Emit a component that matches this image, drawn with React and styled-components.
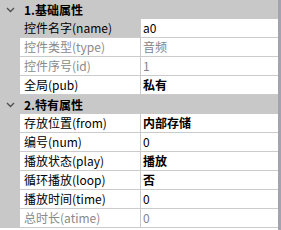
import React from "react";
import styled, { createGlobalStyle } from "styled-components";

const GlobalStyle = createGlobalStyle`
  body {
    margin: 0;
    background: #ffffff;
    font-family: "Noto Sans CJK SC", "Liberation Sans", sans-serif;
  }
`;

const groups = [
  {
    title: "1.基础属性",
    rows: [
      { label: "控件名字(name)", value: "a0", current: true },
      { label: "控件类型(type)", value: "音频", disabled: true },
      { label: "控件序号(id)", value: "1", disabled: true },
      { label: "全局(pub)", value: "私有", bold: true },
    ],
  },
  {
    title: "2.特有属性",
    rows: [
      { label: "存放位置(from)", value: "内部存储", bold: true },
      { label: "编号(num)", value: "0" },
      { label: "播放状态(play)", value: "播放", bold: true },
      { label: "循环播放(loop)", value: "否", bold: true },
      { label: "播放时间(time)", value: "0" },
      { label: "总时长(atime)", value: "0", disabled: true },
    ],
  },
];

const Panel = styled.div`
  width: 278px;
  height: 230px;
  border-right: 3px solid #a3a3ad;
  background: #ffffff;
  overflow: hidden;
  font-size: 12px;
  color: #000;
`;

const GroupHeader = styled.div`
  display: flex;
  align-items: center;
  height: 19px;
  background: #c8c8c8;
  font-weight: bold;
  line-height: 19px;
`;

const Chevron = styled.div`
  width: 20px;
  height: 19px;
  display: flex;
  align-items: center;
  justify-content: center;
  margin-right: 4px;
`;

const Row = styled.div`
  display: flex;
  height: 19px;
`;

const Gutter = styled.div`
  width: 20px;
  flex: none;
  background: #c8c8c8;
`;

const Label = styled.div`
  width: 116px;
  flex: none;
  padding-left: 4px;
  line-height: 18px;
  border-bottom: 1px solid #cbcbcb;
  background: ${({ $current }) => ($current ? "#c8c8c8" : "#ffffff")};
  color: ${({ $disabled }) => ($disabled ? "#8a8a8a" : "#000")};
  white-space: nowrap;
`;

const Value = styled.div`
  flex: 1;
  padding-left: 2px;
  line-height: 18px;
  border-left: 1px solid #cbcbcb;
  border-bottom: 1px solid #cbcbcb;
  font-weight: ${({ $bold }) => ($bold ? "bold" : "normal")};
  color: ${({ $disabled }) => ($disabled ? "#7c8591" : "#000")};
  white-space: nowrap;
`;

const ChevronIcon = () => (
  <svg width="9" height="6" viewBox="0 0 9 6">
    <path d="M1 1 L4.5 4.5 L8 1" fill="none" stroke="#505050" strokeWidth="1.4" />
  </svg>
);

export default function App() {
  return (
    <>
      <GlobalStyle />
      <Panel>
        {groups.map((g) => (
          <React.Fragment key={g.title}>
            <GroupHeader>
              <Chevron>
                <ChevronIcon />
              </Chevron>
              {g.title}
            </GroupHeader>
            {g.rows.map((r) => (
              <Row key={r.label}>
                <Gutter />
                <Label $current={r.current} $disabled={r.disabled}>
                  {r.label}
                </Label>
                <Value $bold={r.bold} $disabled={r.disabled}>
                  {r.value}
                </Value>
              </Row>
            ))}
          </React.Fragment>
        ))}
      </Panel>
    </>
  );
}
